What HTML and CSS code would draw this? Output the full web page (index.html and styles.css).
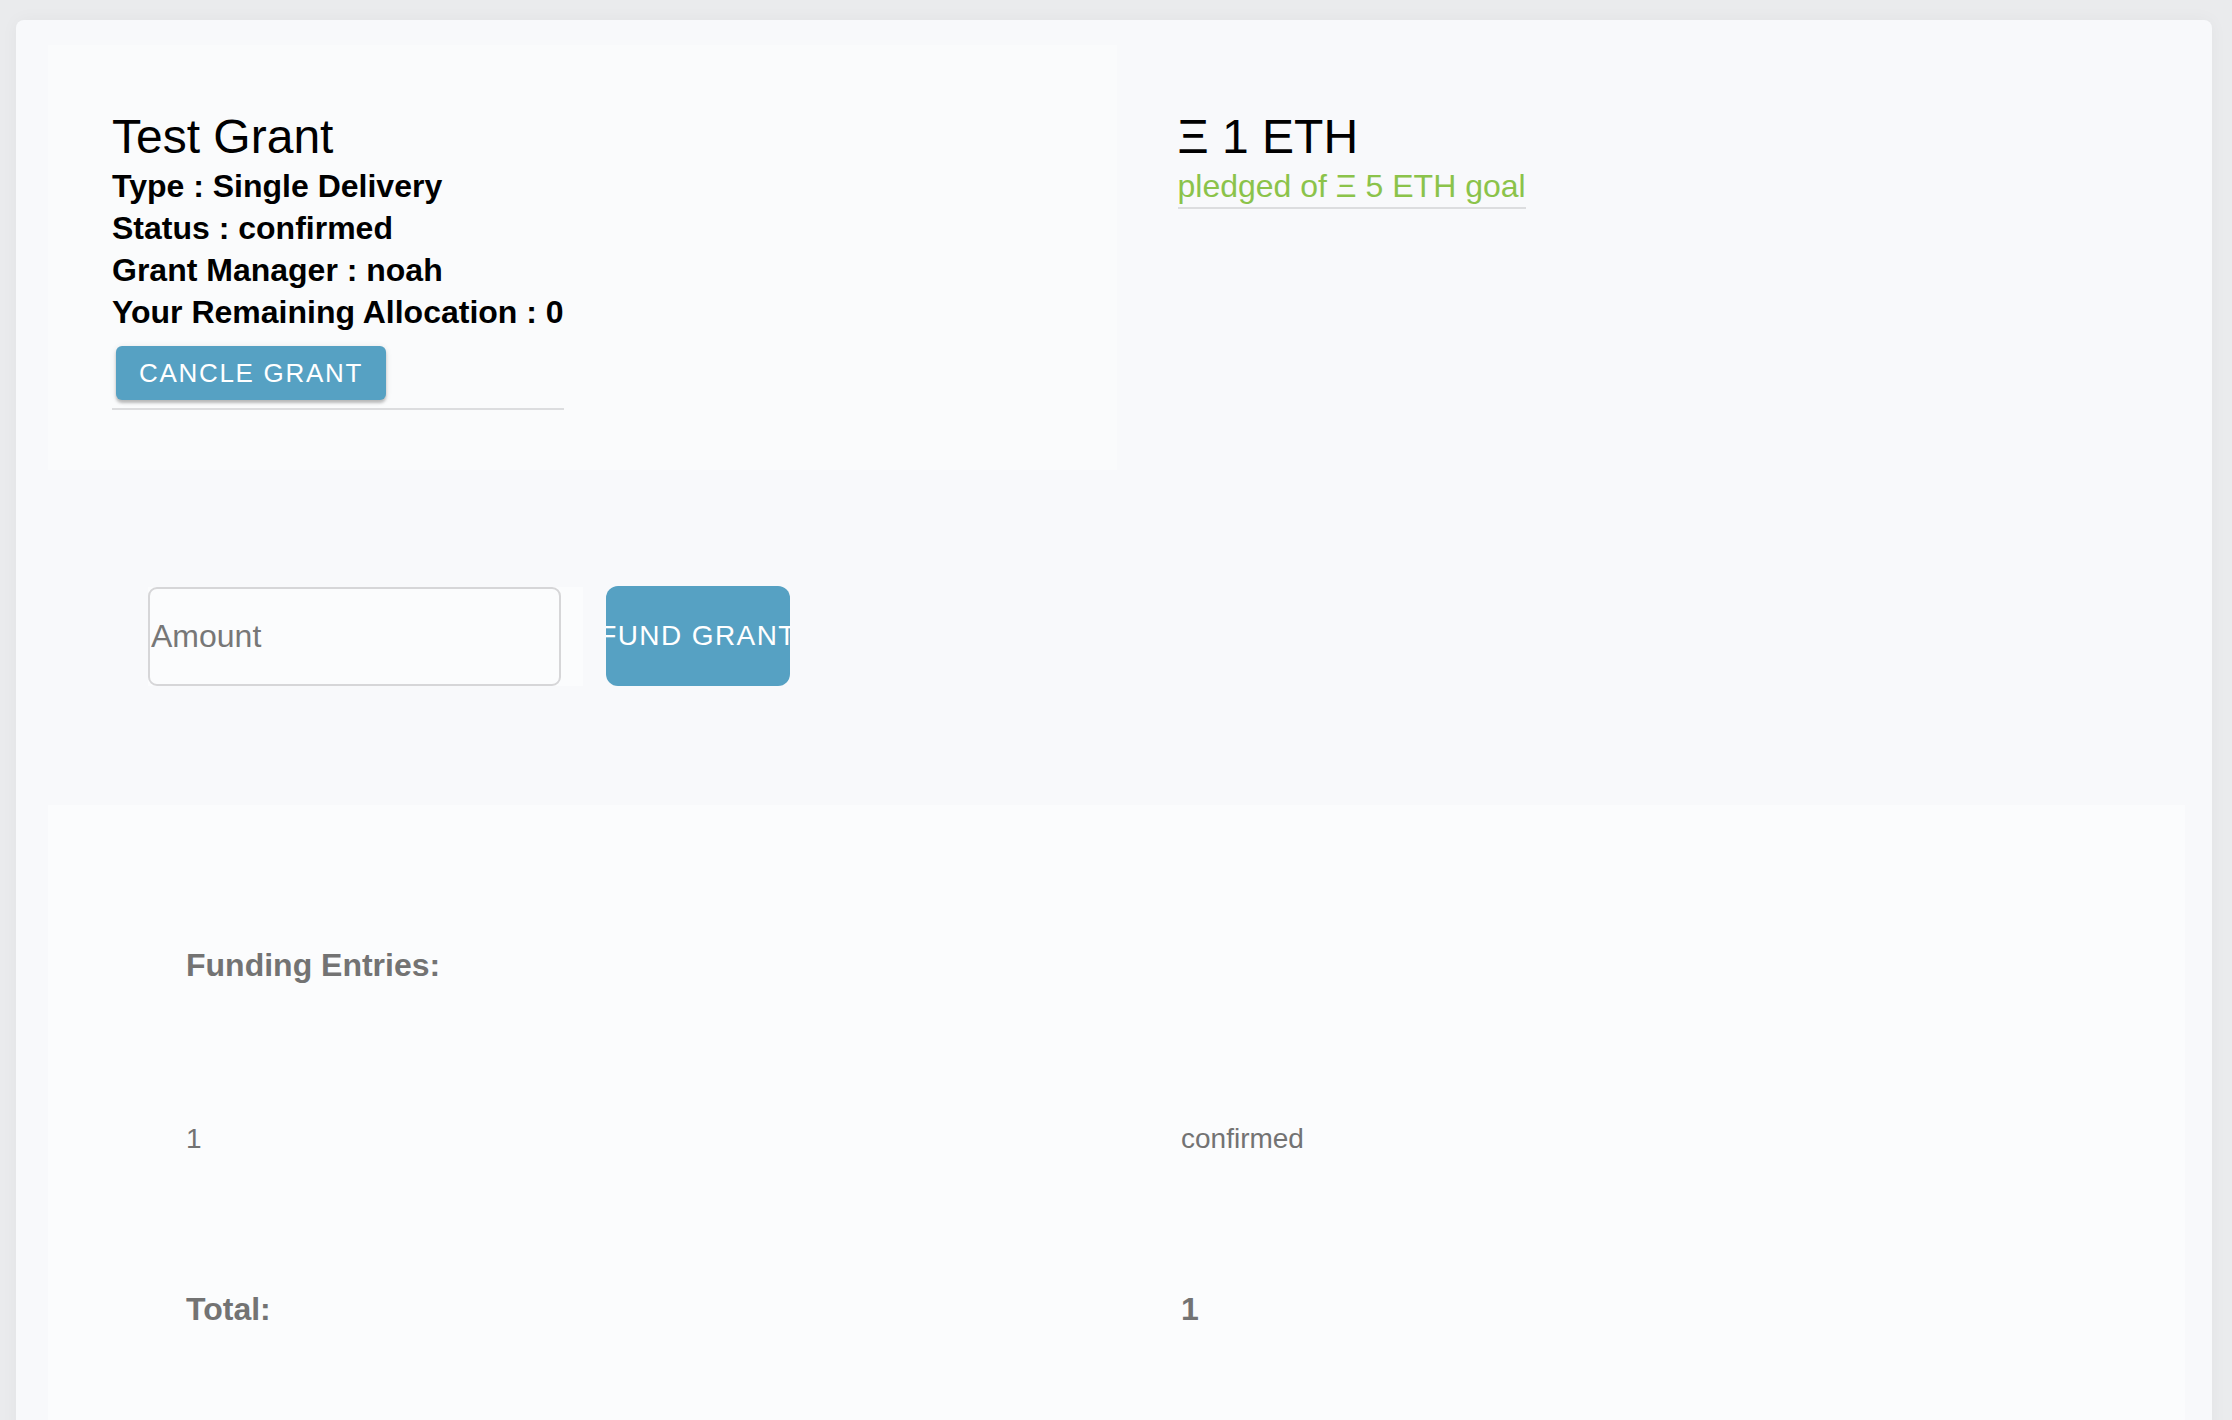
FILE: index.html
```html
<!DOCTYPE html>
<html lang="en">
<head>
<meta charset="utf-8">
<title>Test Grant</title>
<link rel="stylesheet" href="styles.css">
</head>
<body>
<div class="card">
  <div class="top-grid">
    <div class="panel info-panel">
      <div class="info">
        <div class="title">Test Grant</div>
        <div class="meta">Type : Single Delivery</div>
        <div class="meta">Status : confirmed</div>
        <div class="meta">Grant Manager : noah</div>
        <div class="meta">Your Remaining Allocation : 0</div>
        <button class="btn cancel">CANCLE GRANT</button>
      </div>
    </div>
    <div class="pledge-col">
      <div class="pledge">
        <div class="title">Ξ 1 ETH</div>
        <div class="pledged">pledged of Ξ 5 ETH goal</div>
      </div>
    </div>
  </div>

  <div class="fund-row">
    <div class="amount-wrap">
      <input class="amount" type="text" placeholder="Amount">
    </div>
    <button class="btn fund"><span>FUND GRANT</span></button>
  </div>

  <div class="entries">
    <div class="entries-grid">
      <div class="cell head">Funding Entries:</div>
      <div class="cell head"></div>
      <div class="cell val">1</div>
      <div class="cell val">confirmed</div>
      <div class="cell head">Total:</div>
      <div class="cell head">1</div>
    </div>
  </div>
</div>
</body>
</html>
```

FILE: styles.css
```css
html, body {
  margin: 0;
  padding: 0;
}

body {
  background: #eaebed;
  font-family: "Liberation Sans", Arial, Helvetica, sans-serif;
  color: #000;
  height: 1420px;
  overflow: hidden;
}

.card {
  margin: 20px 20px 0 16px;
  padding: 25px 27px 0 32px;
  background: #f8f9fb;
  border-radius: 8px 8px 0 0;
  box-shadow: 0 0 18px rgba(0, 0, 0, 0.04);
  min-height: 1500px;
  box-sizing: border-box;
}

.top-grid {
  display: grid;
  grid-template-columns: 1fr 1fr;
}

.panel {
  background: #fafbfc;
}

.info-panel {
  padding: 64px 64px 60px 64px;
}

.info {
  display: inline-block;
  border-bottom: 2px solid #dcdddf;
}

.title {
  font-size: 48px;
  line-height: 56px;
  font-weight: 400;
  color: #000;
}

.meta {
  font-size: 32px;
  line-height: 42px;
  font-weight: 700;
  color: #000;
}

.btn {
  border: none;
  color: #fff;
  background: #56a1c3;
  font-family: "Liberation Sans", Arial, Helvetica, sans-serif;
  cursor: pointer;
}

.cancel {
  display: block;
  width: 270px;
  height: 54px;
  margin: 13px 4px 8px 4px;
  padding: 0;
  border-radius: 6px;
  font-size: 26px;
  letter-spacing: 1.7px;
  box-shadow: 0 3px 3px rgba(0, 0, 0, 0.22), 0 1px 6px rgba(0, 0, 0, 0.1);
}

.pledge-col {
  padding: 64px 63px 64px 61px;
}

.pledge {
  display: inline-block;
  border-bottom: 2px solid #dcdddf;
}

.pledged {
  font-size: 32px;
  line-height: 42px;
  color: #8bc34a;
}

.fund-row {
  display: flex;
  align-items: center;
  gap: 23px;
  margin-top: 116px;
  padding-left: 100px;
}

.amount-wrap {
  background: #fbfcfd;
  padding: 0 22px 0 0;
  display: flex;
}

.amount {
  width: 413px;
  height: 99px;
  box-sizing: border-box;
  border: 2px solid #d6d6d8;
  border-radius: 9px;
  background: #fbfcfd;
  padding: 0 0 0 1px;
  font-family: "Liberation Sans", Arial, Helvetica, sans-serif;
  font-size: 32px;
  color: #333;
  outline: none;
}

.amount::placeholder {
  color: #777;
}

.fund {
  width: 184px;
  height: 100px;
  border-radius: 12px;
  padding: 0;
  overflow: hidden;
  display: flex;
  justify-content: center;
  align-items: center;
  font-size: 28px;
  letter-spacing: 1.4px;
  white-space: nowrap;
}

.fund span {
  flex: none;
}

.entries {
  margin-top: 119px;
  background: #fbfcfd;
  padding: 139px 73px 200px 74px;
}

.entries-grid {
  display: grid;
  grid-template-columns: 1fr 1fr;
}

.cell {
  padding: 0 64px;
  color: #737373;
  line-height: 42px;
  min-height: 42px;
}

.cell.head {
  font-size: 32px;
  font-weight: 700;
}

.cell.val {
  font-size: 28px;
  margin: 132px 0 128px;
}
```
